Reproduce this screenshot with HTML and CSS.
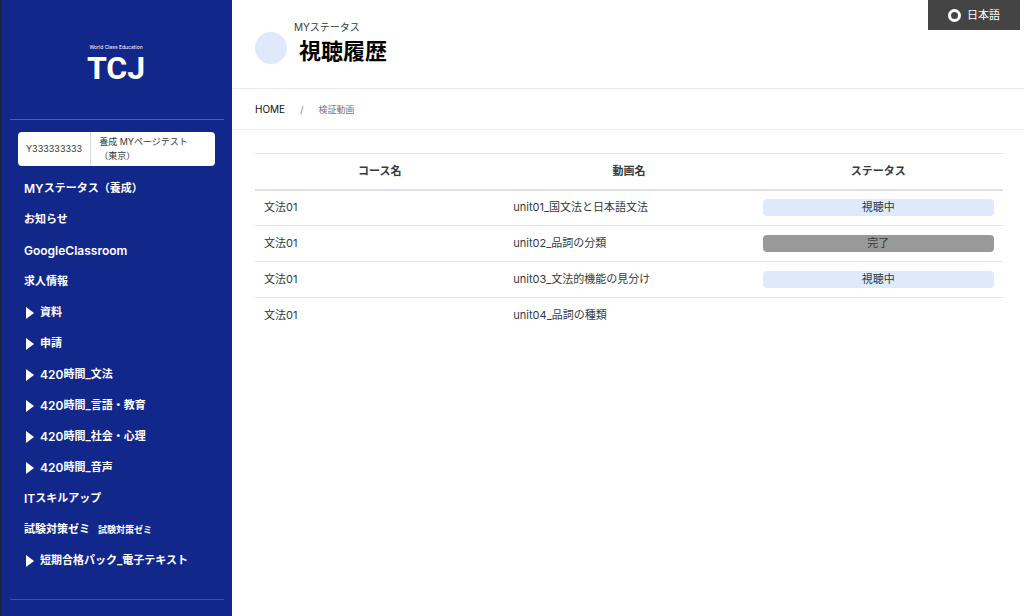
FILE: index.html
```html
<!DOCTYPE html>
<html lang="ja">
<head>
<meta charset="utf-8">
<meta name="viewport" content="width=device-width, initial-scale=1">
<title>視聴履歴</title>
<link rel="stylesheet" href="styles.css">
</head>
<body>
<div class="layout">
  <aside class="sidebar">
    <div class="brand">
      <span class="brand-tagline">World Class Education</span>
      <span class="brand-name">TCJ</span>
    </div>
    <div class="account">
      <span class="account-id">Y333333333</span>
      <span class="account-name">養成 MYページテスト<br>（東京）</span>
    </div>
    <nav class="menu">
      <a class="menu-item" href="#"><span class="latin">MY</span>ステータス（養成）</a>
      <a class="menu-item" href="#">お知らせ</a>
      <a class="menu-item" href="#"><span class="latin">GoogleClassroom</span></a>
      <a class="menu-item" href="#">求人情報</a>
      <a class="menu-item parent" href="#">資料</a>
      <a class="menu-item parent" href="#">申請</a>
      <a class="menu-item parent" href="#"><span class="latin">420</span>時間_文法</a>
      <a class="menu-item parent" href="#"><span class="latin">420</span>時間_言語・教育</a>
      <a class="menu-item parent" href="#"><span class="latin">420</span>時間_社会・心理</a>
      <a class="menu-item parent" href="#"><span class="latin">420</span>時間_音声</a>
      <a class="menu-item" href="#"><span class="latin">IT</span>スキルアップ</a>
      <a class="menu-item" href="#">試験対策ゼミ<small class="menu-note">試験対策ゼミ</small></a>
      <a class="menu-item parent" href="#">短期合格パック_電子テキスト</a>
    </nav>
  </aside>
  <main class="content">
    <header class="page-header">
      <span class="page-mark"></span>
      <div class="page-heading">
        <p class="page-category">MYステータス</p>
        <h1 class="page-title">視聴履歴</h1>
      </div>
      <button class="language" type="button"><span class="language-ring"></span>日本語</button>
    </header>
    <nav class="breadcrumb" aria-label="breadcrumb">
      <a class="breadcrumb-home" href="#">HOME</a>
      <span>/</span>
      <span class="breadcrumb-current">検証動画</span>
    </nav>
    <section class="history">
      <table class="history-table">
        <thead>
          <tr><th>コース名</th><th>動画名</th><th>ステータス</th></tr>
        </thead>
        <tbody>
          <tr><td>文法01</td><td>unit01_国文法と日本語文法</td><td><span class="status">視聴中</span></td></tr>
          <tr><td>文法01</td><td>unit02_品詞の分類</td><td><span class="status done">完了</span></td></tr>
          <tr><td>文法01</td><td>unit03_文法的機能の見分け</td><td><span class="status">視聴中</span></td></tr>
          <tr><td>文法01</td><td>unit04_品詞の種類</td><td></td></tr>
        </tbody>
      </table>
    </section>
  </main>
</div>
</body>
</html>
```
FILE: styles.css
```css
* { box-sizing: border-box; }

body {
  margin: 0;
  background: #fff;
  color: #343a40;
  font: 11px/17px Inter, "Noto Sans CJK JP", sans-serif;
}

a { color: inherit; text-decoration: none; }

.layout { display: flex; min-height: 100vh; }

.sidebar {
  flex: 0 0 232px;
  padding: 0 8px 16px;
  background: #12278a;
  border-left: 2px solid #1d2440;
  color: #fff;
}

.brand {
  display: flex;
  flex-direction: column;
  align-items: center;
  height: 120px;
  padding: 44px 2px 0 0;
  border-bottom: 1px solid #4c5eb0;
}

.brand-tagline { font-size: 5px; line-height: 7px; }

.brand-name {
  font-family: Roboto, sans-serif;
  font-size: 32px;
  line-height: 34px;
  font-weight: 700;
}

.account {
  display: flex;
  margin: 12px 9px 0 8px;
  border-radius: 4px;
  background: #fff;
  color: #343a40;
  font-size: 9px;
  line-height: 14px;
}

.account-id {
  display: flex;
  align-items: center;
  padding: 0 8px;
  border-right: 1px solid #d5d8dc;
}

.account-name { padding: 3px 8px; }

.menu {
  display: flex;
  flex-direction: column;
  padding: 7px 0 23px 14px;
  border-bottom: 1px solid #3c4fa6;
}

.menu-item {
  display: flex;
  align-items: center;
  height: 31px;
  font-weight: 700;
  white-space: nowrap;
}

.latin { font-size: 12px; font-weight: 600; }

.parent::before {
  content: "";
  margin: 0 6px 0 2px;
  border: solid transparent;
  border-width: 6px 0 6px 8px;
  border-left-color: #fff;
}

.menu-note { margin-left: 8px; font-size: 9px; }

.content { flex: 1; min-width: 0; }

.page-header {
  display: flex;
  height: 89px;
  padding-left: 23px;
  border-bottom: 1px solid #e9eaec;
}

.page-mark {
  width: 32px;
  height: 32px;
  margin-top: 32px;
  border-radius: 50%;
  background: #dee9fc;
}

.page-heading { flex: 1; padding: 19px 0 0 7px; }

.page-category { margin: 0; font-size: 10px; line-height: 16px; }

.page-title {
  margin: 0 0 0 5px;
  color: #000;
  font-size: 22px;
  line-height: 32px;
  font-weight: 700;
}

.language {
  display: flex;
  align-items: center;
  gap: 6px;
  height: 30px;
  margin-right: 4px;
  padding: 0 20px;
  border: 0;
  background: #444;
  color: #fff;
  font: inherit;
}

.language-ring {
  width: 13px;
  height: 13px;
  border: 3px solid #fff;
  border-radius: 50%;
}

.breadcrumb {
  display: flex;
  align-items: center;
  gap: 15px;
  height: 41px;
  padding-left: 23px;
  border-bottom: 1px solid #eceef0;
  color: #777;
  font-size: 9px;
}

.breadcrumb-home { color: #111; font-size: 10px; }

.history { padding: 23px 21px 24px 23px; }

.history-table { width: 100%; border-collapse: collapse; table-layout: fixed; }

.history-table th {
  height: 36px;
  padding: 0 9px;
  border-top: 1px solid #e3e5e8;
  border-bottom: 2px solid #dee2e6;
  font-weight: 700;
}

.history-table td {
  height: 36px;
  padding: 0 9px;
  border-top: 1px solid #e3e5e8;
}

.status {
  display: block;
  border-radius: 4px;
  background: #dee9fc;
  text-align: center;
}

.done { background: #999; }
```
